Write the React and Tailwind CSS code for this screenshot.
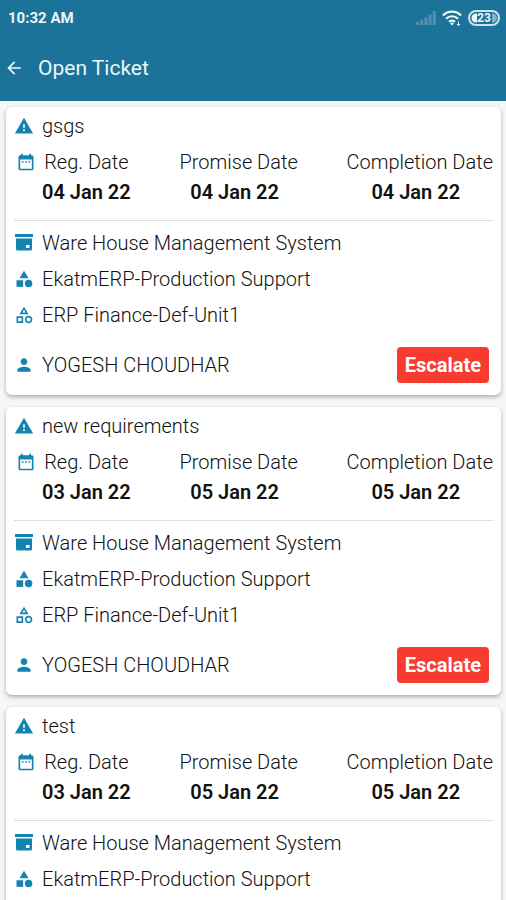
import React from 'react';
import {
  MdArrowBack,
  MdCategory,
  MdDateRange,
  MdOutlineCategory,
  MdPerson,
  MdWarning,
} from 'react-icons/md';

const tickets = [
  { id: 1, title: 'gsgs', regDate: '04 Jan 22', promiseDate: '04 Jan 22', completionDate: '04 Jan 22' },
  { id: 2, title: 'new requirements', regDate: '03 Jan 22', promiseDate: '05 Jan 22', completionDate: '05 Jan 22' },
  { id: 3, title: 'test', regDate: '03 Jan 22', promiseDate: '05 Jan 22', completionDate: '05 Jan 22' },
];

const ModuleIcon = () => (
  <svg viewBox="0 0 20 20" width="20" height="20" fill="currentColor" aria-hidden="true">
    <path d="M1 1h18v3H1z" />
    <path fillRule="evenodd" d="M2 5.500h16V16a1.500 1.500 0 0 1-1.500 1.500h-13A1.500 1.500 0 0 1 2 16zM12 12v3h3.500v-3z" />
  </svg>
);

const SignalIcon = () => (
  <svg viewBox="0 0 20 14" width="20" height="14" fill="currentColor" aria-hidden="true">
    <path d="M0 11h3v3H0zM4.200 9h3v5h-3zM8.400 6.500h3V14h-3zM12.600 3.500h3V14h-3zM16.800 0h3v14h-3z" />
  </svg>
);

const WifiIcon = () => (
  <svg viewBox="0 0 20 16" width="20" height="16" fill="none" stroke="currentColor" strokeWidth="2.200" aria-hidden="true">
    <path d="M1 5.500a12.500 12.500 0 0 1 18 0M4 8.800a8.300 8.300 0 0 1 12 0M7 11.800a4.200 4.200 0 0 1 6 0" />
    <path d="M10 15.500l-2-2.200a3 3 0 0 1 4 0z" fill="currentColor" stroke="none" />
    <path d="M16.500 11.500v4M15 14l1.500 1.500L18 14" strokeWidth="1" />
  </svg>
);

const BatteryIcon = () => (
  <svg viewBox="0 0 32 16" width="32" height="16" aria-hidden="true">
    <rect x="1" y="1" width="30" height="14" rx="7" fill="none" stroke="currentColor" strokeWidth="2" opacity="0.85" />
    <path d="M8 3.500a4.500 4.500 0 0 0 0 9h1v-9z" fill="currentColor" />
    <path d="M24 3.500h.500a4.500 4.500 0 0 1 0 9H24z" fill="currentColor" opacity="0.5" />
    <text x="16" y="12" textAnchor="middle" fontSize="12" fontWeight="700" fill="currentColor">23</text>
  </svg>
);

const DateColumn = ({ label, value, labelClass = '' }) => (
  <div className="flex flex-col items-center">
    <dt className={`h-9 leading-9 ${labelClass}`}>{label}</dt>
    <dd className="h-6 leading-6 font-semibold">{value}</dd>
  </div>
);

const DetailRow = ({ icon, children }) => (
  <div className="flex h-9 items-center gap-2">
    <span className="text-[#1583b0]">{icon}</span>
    <span>{children}</span>
  </div>
);

const TicketCard = ({ ticket }) => (
  <article className="rounded-md bg-white px-2 pt-px pb-3 shadow-[0_2px_4px_rgba(0,0,0,0.3)]">
    <h2 className="flex h-9 items-center gap-2">
      <MdWarning size={20} className="text-[#1583b0]" />
      {ticket.title}
    </h2>
    <div className="flex gap-2 border-b border-[#dedede] pb-4">
      <div className="-mr-0.5 flex h-9 items-center pl-0.5 text-[#1583b0]">
        <MdDateRange size={20} />
      </div>
      <dl className="flex flex-1 justify-between">
        <DateColumn label="Reg. Date" value={ticket.regDate} />
        <DateColumn label="Promise Date" value={ticket.promiseDate} labelClass="pl-2" />
        <DateColumn label="Completion Date" value={ticket.completionDate} labelClass="pl-2" />
      </dl>
    </div>
    <div className="pt-1">
      <DetailRow icon={<ModuleIcon />}>Ware House Management System</DetailRow>
      <DetailRow icon={<MdCategory size={20} />}>EkatmERP-Production Support</DetailRow>
      <DetailRow icon={<MdOutlineCategory size={20} />}>ERP Finance-Def-Unit1</DetailRow>
      <div className="mt-3.5 flex items-center justify-between pr-1">
        <DetailRow icon={<MdPerson size={20} />}>YOGESH CHOUDHAR</DetailRow>
        <button type="button" className="h-9 rounded bg-[#f83b30] px-2 font-bold text-white">
          Escalate
        </button>
      </div>
    </div>
  </article>
);

const App = () => {
  return (
    <div className="min-h-screen bg-[#f8f6f4] font-[Roboto,sans-serif] text-[20px] leading-6 font-light text-[#111111]">
      <header className="sticky top-0 bg-[#1b7399] pb-px text-[#eef6fa]">
        <div className="flex h-9 items-center justify-between pr-1.5 pl-2">
          <span className="text-[15px] font-bold">10:32 AM</span>
          <div className="flex items-center gap-1.5">
            <span className="text-[#5491b0]">
              <SignalIcon />
            </span>
            <WifiIcon />
            <BatteryIcon />
          </div>
        </div>
        <div className="flex h-16 items-center gap-3.5 pl-1">
          <button type="button" aria-label="Back">
            <MdArrowBack size={20} />
          </button>
          <h1 className="text-[21px] font-normal">Open Ticket</h1>
        </div>
      </header>
      <main className="flex flex-col gap-3 pt-1.5 pr-[5px] pb-3 pl-1.5">
        {tickets.map((ticket) => (
          <TicketCard key={ticket.id} ticket={ticket} />
        ))}
      </main>
    </div>
  );
};

export default App;
